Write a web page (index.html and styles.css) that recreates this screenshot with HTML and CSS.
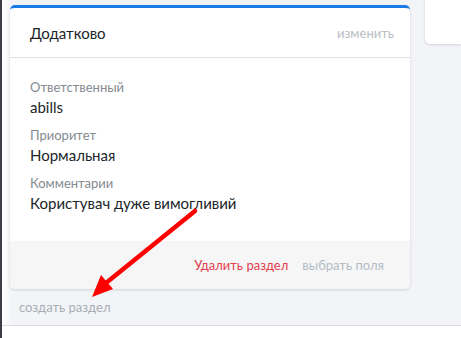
FILE: index.html
```html
<!DOCTYPE html>
<html lang="ru">
<head>
  <meta charset="UTF-8" />
  <meta name="viewport" content="width=device-width, initial-scale=1.0"/>
  <title>Додатково</title>
  <link rel="stylesheet" href="styles.css">
</head>
<body>
  <div class="page">
    <div class="content">
      <div class="column">
        <div class="card">
          <div class="card-header">
            <span class="card-title">Додатково</span>
            <a class="card-edit">изменить</a>
          </div>
          <div class="card-body">
            <div class="field">
              <div class="field-label">Ответственный</div>
              <div class="field-value">abills</div>
            </div>
            <div class="field">
              <div class="field-label">Приоритет</div>
              <div class="field-value">Нормальная</div>
            </div>
            <div class="field">
              <div class="field-label">Комментарии</div>
              <div class="field-value">Користувач дуже вимогливий</div>
            </div>
          </div>
          <div class="card-footer">
            <a class="link-delete">Удалить раздел</a>
            <a class="link-fields">выбрать поля</a>
          </div>
        </div>
        <a class="create-section">создать раздел</a>
      </div>
      <div class="side-card"></div>
    </div>
    <div class="bottom-bar"></div>

    <!-- annotation arrow -->
    <svg class="arrow" width="461" height="338" viewBox="0 0 461 338">
      <line x1="195" y1="211" x2="106" y2="283" stroke="#ff0000" stroke-width="4.5" stroke-linecap="round"/>
      <polygon points="92,297 101,275 113,289" fill="#ff0000"/>
    </svg>
  </div>
</body>
</html>
```

FILE: styles.css
```css
body {
  margin: 0;
  font-family: Lato, "Noto Sans", sans-serif;
  background: #f3f4f8;
  overflow: hidden;
}

.page {
  position: relative;
  height: 338px;
  border-left: 2px solid #3a3e44;
  background: linear-gradient(to right, #ffffff 0, #f3f4f8 10px);
  display: flex;
  flex-direction: column;
}

.content {
  display: flex;
  align-items: flex-start;
  gap: 15px;
  padding: 5px 0 0 8px;
  height: 325px;
  box-sizing: border-box;
}

.column {
  width: 400px;
  flex-shrink: 0;
  display: flex;
  flex-direction: column;
}

.card {
  background: #fff;
  border-top: 3px solid #1a7ae6;
  border-radius: 5px;
  box-shadow: 0 1px 3px rgba(0, 0, 0, 0.14);
  overflow: hidden;
}

.card-header {
  display: flex;
  justify-content: space-between;
  align-items: center;
  height: 49px;
  padding: 0 16px 0 20px;
  border-bottom: 1px solid #dfe1e4;
}

.card-title {
  font-size: 15px;
  color: #212529;
}

.card-edit {
  font-size: 13px;
  color: #b8bdc3;
}

.card-body {
  padding: 20px 20px 20px;
  height: 143px;
}

.field {
  margin-bottom: 8px;
}

.field-label {
  font-size: 13px;
  color: #858a90;
  line-height: 18px;
}

.field-value {
  font-size: 15px;
  color: #212529;
  line-height: 22px;
}

.card-footer {
  display: flex;
  justify-content: flex-end;
  gap: 14px;
  align-items: center;
  height: 48px;
  padding: 0 26px;
  background: #f6f6f6;
  font-size: 13px;
}

.link-delete {
  color: #e2404e;
}

.link-fields {
  color: #b3bbc5;
}

.create-section {
  margin: 10px 0 0 9px;
  font-size: 13px;
  color: #a9aeb4;
}

/* next card, cut off by the window edge */
.side-card {
  flex: 1;
  min-width: 0;
  height: 49px;
  margin-top: -10px;
  background: #fff;
  border-radius: 0 0 0 5px;
  box-shadow: 0 1px 3px rgba(0, 0, 0, 0.14);
}

.bottom-bar {
  flex: 1;
  background: #fff;
  border-top: 1px solid #dcdee2;
}

.arrow {
  position: absolute;
  top: 0;
  left: -2px;
  pointer-events: none;
}
```
